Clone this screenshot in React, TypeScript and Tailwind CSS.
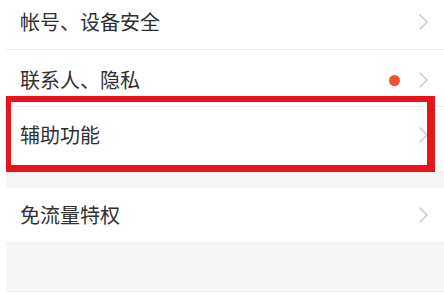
import React from "react";

function Chevron() {
  return (
    <svg width="9" height="16" viewBox="0 0 9 16" fill="none" className="shrink-0">
      <path d="M1 1l7 7-7 7" stroke="#cbcbcb" strokeWidth="1.5" strokeLinecap="round" strokeLinejoin="round" />
    </svg>
  );
}

type RowProps = {
  label: string;
  className: string;
  dot?: boolean;
};

function Row({ label, className, dot }: RowProps) {
  return (
    <div className={`flex items-center justify-between bg-white pl-[14px] pr-[16px] ${className}`}>
      <span className="text-[20px] leading-none text-[#2f2f2f]">{label}</span>
      <div className="flex items-center gap-[19px]">
        {dot && <span className="block h-[11px] w-[11px] rounded-full bg-[#f2532a]" />}
        <Chevron />
      </div>
    </div>
  );
}

export default function App() {
  return (
    <div
      className="relative h-[301px] w-[444px] overflow-hidden bg-white pl-[6px]"
      style={{ fontFamily: '"Noto Sans CJK SC", "Noto Sans", sans-serif' }}
    >
      <div className="flex flex-col">
        <Row label="帐号、设备安全" className="h-[50px] pb-[5px] border-b border-[#ededed]" />
        <Row label="联系人、隐私" dot className="h-[57px] pt-[4px] border-b border-[#ededed]" />
        <Row label="辅助功能" className="h-[64px] pb-[8px]" />
        <div className="h-[17px] bg-[#f6f6f6]" />
        <Row label="免流量特权" className="h-[55px] border-b border-[#eeeeee]" />
        <div className="h-[49px] border-b border-[#ececec] bg-[#f6f6f6]" />
      </div>

      {/* annotation box */}
      <div className="absolute left-[6px] top-[96px] h-[76px] w-[429px] border-[5px] border-t-[6px] border-r-[8px] border-b-[7px] border-[#e8141c]" />
    </div>
  );
}
